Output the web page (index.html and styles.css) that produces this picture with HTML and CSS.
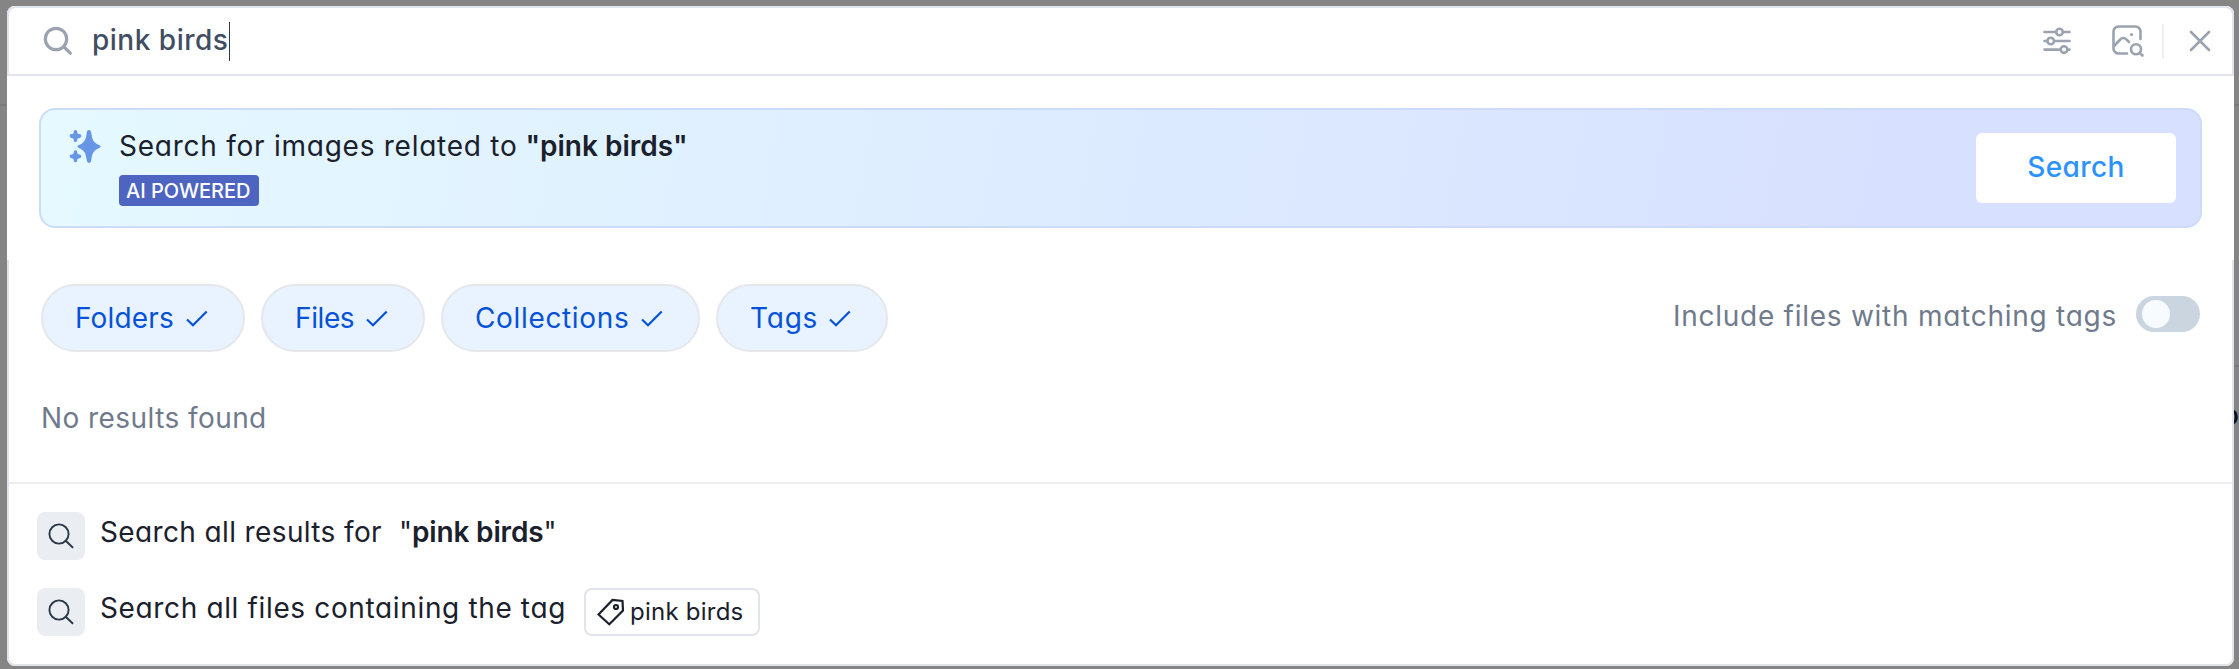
FILE: index.html
```html
<!DOCTYPE html>
<html lang="en">
<head>
<meta charset="utf-8">
<title>Search</title>
<link rel="stylesheet" href="styles.css">
</head>
<body>
<span class="rule rule-top"></span>
<span class="rule rule-side"></span>
<span class="behind">o</span>
<main class="dialog">
  <header class="bar">
    <svg class="bar-search" width="30" height="30" viewBox="0 0 30 30"><circle cx="13" cy="13" r="10.7"/><path d="M20.7 20.7 27.3 27.2"/></svg>
    <span class="query"><span class="t-query">pink birds</span></span><i class="caret"></i>
    <div class="tools">
      <svg class="i-filter" width="28" height="28" viewBox="0 0 28 28"><path d="M1.5 5H13M20 5H26.500M1.500 14H4M11.500 14H26.500M1.500 22.600H17.500M24.500 22.600H26.500"/><circle cx="16.500" cy="5" r="3.300"/><circle cx="7.700" cy="14" r="3.300"/><circle cx="21" cy="22.600" r="3.300"/></svg>
      <svg class="i-image" width="32" height="32" viewBox="0 0 32 32"><path d="M28.500 14V6.500a5 5 0 0 0-5-5H6.500a5 5 0 0 0-5 5V23.500a5 5 0 0 0 5 5H15M2 21 8.200 14.500C10 12.700 12.500 12.500 14.300 14.300L17 17"/><circle cx="24" cy="24.300" r="5"/><path d="M27.800 28 30.500 30.500"/><circle class="dot" cx="19.500" cy="9.500" r="1.600"/></svg>
      <i class="sep"></i>
      <svg class="i-close" width="22" height="22" viewBox="0 0 22 22"><path d="M2 2 20 20M20 2 2 20"/></svg>
    </div>
  </header>
  <section class="promo">
    <div class="banner">
      <svg class="spark" width="32" height="34" viewBox="0 0.5 32 34"><path d="M20 .5c1.200 0 2 1 2.200 2.400.9 6.600 2 10 7.300 12.300 1.200.5 2 1 2 1.800s-.8 1.300-2 1.800c-5.300 2.300-6.400 5.700-7.300 12.300-.2 1.400-1 2.400-2.200 2.400s-2-1-2.200-2.400c-.9-6.600-2-10-7.300-12.300-1.200-.5-2-1-2-1.800s.8-1.300 2-1.800c5.300-2.300 6.400-5.700 7.300-12.300C18 1.500 18.800.5 20 .5Z"/><path id="s" d="M6.500.5c1 0 1.600.8 1.700 1.800.1 1.700.6 2.200 2.300 2.300 1 .1 1.800.7 1.800 1.900s-.8 1.800-1.800 1.900c-1.700.1-2.200.6-2.300 2.300-.1 1-.7 1.800-1.700 1.800s-1.600-.8-1.700-1.800C4.700 9 4.200 8.500 2.500 8.400 1.500 8.300.7 7.700.7 6.500s.8-1.800 1.800-1.900c1.700-.1 2.200-.6 2.300-2.300C4.900 1.300 5.500.5 6.500.5Z"/><use href="#s" y="20.300"/></svg>
      <div class="copy">
        <div class="line"><span class="t-related">Search for images related to</span> <b class="t-relq">"pink birds"</b></div>
        <span class="badge"><span class="t-badge">AI POWERED</span></span>
      </div>
      <button class="go"><span class="t-go">Search</span></button>
    </div>
  </section>
  <section class="filters">
    <div class="chips">
      <span class="chip folders"><span class="t-folders">Folders</span><svg width="22" height="17" viewBox="0 0 22 17"><path d="M1 9.500 7 15.200 20.700 1.500"/></svg></span>
      <span class="chip files"><span class="t-files">Files</span><svg width="22" height="17" viewBox="0 0 22 17"><path d="M1 9.500 7 15.200 20.700 1.500"/></svg></span>
      <span class="chip collections"><span class="t-coll">Collections</span><svg width="22" height="17" viewBox="0 0 22 17"><path d="M1 9.500 7 15.200 20.700 1.500"/></svg></span>
      <span class="chip tags"><span class="t-tags">Tags</span><svg width="22" height="17" viewBox="0 0 22 17"><path d="M1 9.500 7 15.200 20.700 1.500"/></svg></span>
    </div>
    <div class="include"><span class="t-incl">Include files with matching tags</span><i class="toggle"></i></div>
  </section>
  <p class="empty"><span class="t-empty">No results found</span></p>
  <section class="actions">
    <div class="row">
      <span class="box"><svg width="26" height="26" viewBox="0 0 26 26"><circle cx="11" cy="11" r="9.600"/><path d="M17.700 17.700 24.500 24.300"/></svg></span>
      <span class="label all"><span class="t-all">Search all results for</span></span>
      <span class="label quoted"><span class="t-allq">"<b>pink birds</b>"</span></span>
    </div>
    <div class="row">
      <span class="box"><svg width="26" height="26" viewBox="0 0 26 26"><circle cx="11" cy="11" r="9.600"/><path d="M17.700 17.700 24.500 24.300"/></svg></span>
      <span class="label by-tag"><span class="t-tagl">Search all files containing the tag</span></span>
      <span class="tag"><svg width="28" height="28" viewBox="0 0 28 28"><path d="M1.500 16.500 15.500 2 25.500 3 26 12.500 12.300 26.300Z"/><circle cx="19" cy="9" r="2"/></svg><span class="t-tag">pink birds</span></span>
    </div>
  </section>
</main>
</body>
</html>
```
FILE: styles.css
```css
* { box-sizing: border-box; }
body {
  margin: 0;
  padding: 6px 5px 3px 7px;
  width: 2239px;
  height: 669px;
  overflow: hidden;
  position: relative;
  background: #858585;
  color: #1a202c;
  font: 28px/42px Inter, "Open Sans", sans-serif;
  font-feature-settings: "cv11", "ss03";
  white-space: nowrap;
}
svg { display: block; flex: none; fill: none; stroke: currentColor; stroke-linecap: round; stroke-linejoin: round; }
b { font-weight: 600; }
.rule { position: absolute; height: 2px; background: #7b7b7b; }
.rule-top { top: 104px; left: 0; right: 0; }
.rule-side { top: 365px; right: 0; width: 10px; }
.behind { position: absolute; left: 2222px; top: 394px; color: #0b101c; font-weight: 500; }
.dialog {
  position: relative;
  height: 660px;
  background: #fff;
  border-radius: 8px;
  box-shadow: inset 0 0 0 2px #e2e4ec;
}
.bar {
  height: 70px;
  display: flex;
  align-items: center;
  padding: 0 21px 0 34px;
  border: 2px solid #e2e4ec;
  border-radius: 8px 8px 0 0;
  color: #9ca3b0;
}
.bar-search { stroke-width: 3.2; }
.query { margin: 0 0 2px 19px; width: 138px; color: #414d63; font-weight: 500; }
.caret { width: 1px; height: 39px; background: #30394a; margin-left: -1px; }
.tools { margin-left: auto; display: flex; align-items: center; stroke-width: 2.6; }
.i-image { margin-left: 41px; }
.dot { fill: currentColor; stroke: none; }
.sep { width: 2px; height: 35px; background: #edf0f5; margin: 0 25px 0 18px; }
.promo { height: 184px; padding: 32px 32px 0; background: #fff; }
.banner {
  height: 120px;
  display: flex;
  align-items: flex-start;
  padding: 23px 24px 0 28px;
  border: 2px solid #ccdcf8;
  border-radius: 16px;
  background: linear-gradient(100deg, #e5f9ff 0%, #d7e1ff 85%);
}
.spark { margin: -3px 0 0; fill: #6796e6; stroke: none; }
.copy { margin-left: 18px; }
.line { height: 42px; margin-top: -8px; }
.badge {
  display: flex;
  align-items: center;
  width: 140px;
  height: 31px;
  margin-top: 8px;
  padding-left: 7px;
  border-radius: 4px;
  background: #4d65c0;
  color: #fff;
  font-size: 20px;
  font-weight: 500;
}
.go {
  width: 200px;
  height: 70px;
  margin-left: auto;
  padding: 0 0 2px;
  border: 0;
  border-radius: 6px;
  background: #fff;
  color: #2b93ff;
  font: inherit;
  font-weight: 500;
  font-feature-settings: inherit;
}
.filters { display: flex; padding: 24px 34px 0; justify-content: space-between; }
.chips { display: flex; gap: 16px; }
.chip {
  display: flex;
  align-items: center;
  justify-content: space-between;
  height: 68px;
  padding: 0 35px 0 32px;
  border: 2px solid #e5e7eb;
  border-radius: 34px;
  background: #e8f3ff;
  color: #0552d8;
}
.chip svg { stroke-width: 2.2; stroke-linecap: butt; stroke-linejoin: miter; }
.folders { width: 204px; }
.files { width: 164px; }
.collections { width: 259px; }
.tags { width: 172px; }
.include { display: flex; align-items: center; height: 60px; color: #6f7a8c; }
.include span { padding-top: 4px; }
.toggle { width: 64px; height: 36px; margin-left: 19px; border-radius: 18px; background: radial-gradient(circle at 20px 18px, #f7fbfe 13.5px, #cbd5e0 14.5px); }
.empty { margin: 45px 0 0 34px; height: 85px; color: #6f7a8c; }
.actions { margin: 0 2px; padding: 28px; border-top: 2px solid #eeeef0; display: grid; gap: 28px; }
.row { display: flex; height: 48px; }
.box { width: 48px; height: 48px; display: grid; place-items: center; border-radius: 8px; background: #eaeef3; color: #2d3748; stroke-width: 1.9; }
.label { margin: -1px 0 0 15px; }
.all { width: 284px; }
.by-tag { width: 468px; }
.quoted { margin-left: 15px; }
.tag {
  display: flex;
  align-items: center;
  width: 176px;
  margin-left: 16px;
  padding-left: 11px;
  border: 2px solid #e2e4ec;
  border-radius: 8px;
  font-size: 24px;
}
.tag svg { stroke-width: 2.2; stroke-linejoin: miter; }
.tag span { margin-left: 5px; }
.t-query { letter-spacing: .5px; }
.t-related { letter-spacing: .75px; }
.t-go { letter-spacing: .4px; }
.t-folders { letter-spacing: .15px; }
.t-files { letter-spacing: -.4px; }
.t-coll { letter-spacing: .65px; }
.t-tags { letter-spacing: .8px; }
.t-incl { letter-spacing: .74px; }
.t-empty { letter-spacing: .43px; }
.t-all { letter-spacing: .37px; }
.t-allq { letter-spacing: -.15px; }
.t-tagl { letter-spacing: .64px; }
.t-tag { letter-spacing: .24px; }
```
